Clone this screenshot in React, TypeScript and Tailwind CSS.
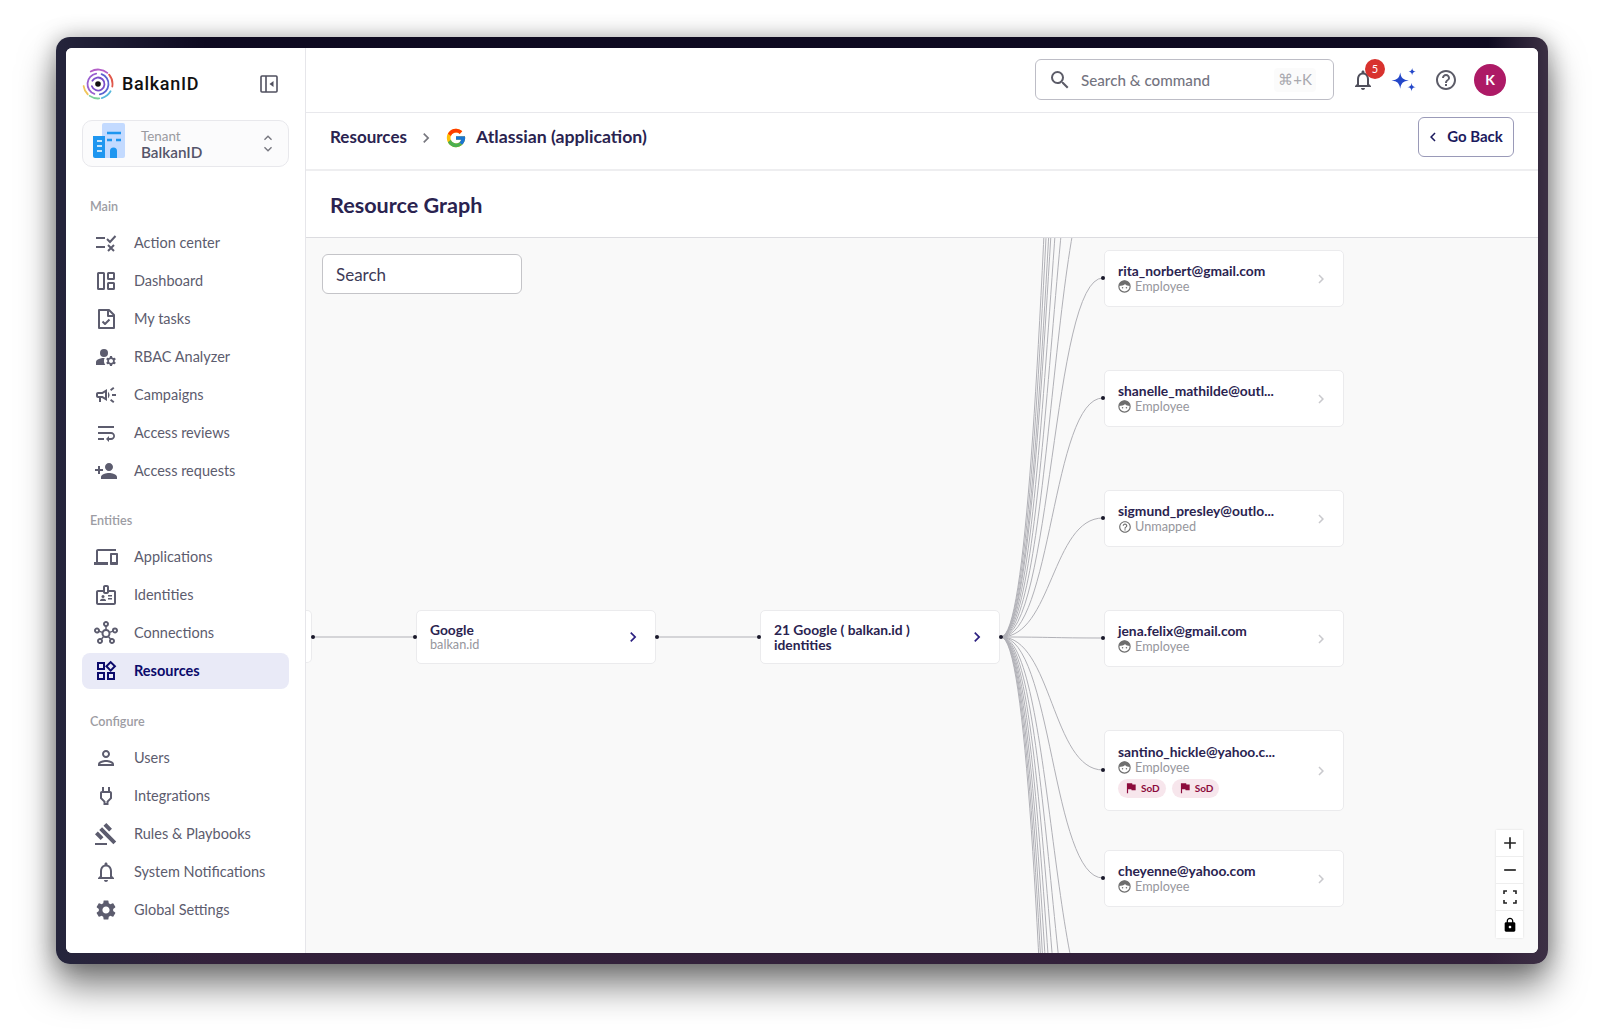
import {
  MdManageAccounts,
  MdOutlineCampaign,
  MdOutlineWrapText,
  MdPersonAdd,
  MdOutlineDevices,
  MdOutlineBadge,
  MdOutlineHub,
  MdOutlineWidgets,
  MdOutlinePerson,
  MdOutlinePower,
  MdGavel,
  MdOutlineNotifications,
  MdSettings,
  MdOutlineHelpOutline,
  MdFlag,
  MdLock,
  MdAdd,
  MdRemove,
  MdSearch,
  MdChevronLeft,
  MdChevronRight,
  MdOutlineExpandLess,
  MdOutlineExpandMore,
} from 'react-icons/md'
import { FcGoogle } from 'react-icons/fc'
import type { ReactNode } from 'react'

function ActionCenterIcon() {
  return (
    <svg viewBox="0 0 24 24" className="w-6 h-6" fill="none" stroke="currentColor" strokeWidth="2">
      <path d="M2 7h9M2 16h9" />
      <path d="M13 8l3 3 5.5-6" />
      <path d="M14 14l6 6M20 14l-6 6" />
    </svg>
  )
}

function DashboardIcon() {
  return (
    <svg viewBox="0 0 24 24" className="w-6 h-6" fill="none" stroke="currentColor" strokeWidth="2">
      <rect x="4" y="4" width="6" height="16" rx="0.5" />
      <rect x="14" y="4" width="6" height="6" rx="0.5" />
      <rect x="14" y="14" width="6" height="6" rx="0.5" />
    </svg>
  )
}

function TasksIcon() {
  return (
    <svg viewBox="0 0 24 24" className="w-6 h-6" fill="none" stroke="currentColor" strokeWidth="2" strokeLinejoin="round">
      <path d="M5 3h10l5 5v13H5z" />
      <path d="M14 3v6h6" />
      <path d="M8.5 14.5l2.5 2.5 4.5-4.5" />
    </svg>
  )
}

// one ring segment of the logo, angles in degrees, clockwise from the top
function arc(r: number, from: number, to: number) {
  const point = (a: number) => {
    const t = ((a - 90) * Math.PI) / 180
    return `${(16 + r * Math.cos(t)).toFixed(2)} ${(16 + r * Math.sin(t)).toFixed(2)}`
  }
  return `M${point(from)} A${r} ${r} 0 ${to - from > 180 ? 1 : 0} 1 ${point(to)}`
}

function LogoIcon() {
  return (
    <svg viewBox="0 0 32 32" className="w-8 h-8" fill="none" strokeLinecap="round">
      <circle cx="16" cy="16" r="2.8" fill="#111" />
      <path d={arc(6.5, -60, 250)} stroke="#7b4fc9" strokeWidth="1.8" />
      <path d={arc(10.5, 200, 350)} stroke="#9a5fd0" strokeWidth="1.8" />
      <path d={arc(10.5, 20, 170)} stroke="#5b63d0" strokeWidth="1.8" />
      <path d={arc(14.5, -30, 40)} stroke="#b45fc8" strokeWidth="1.8" />
      <path d={arc(14.5, 50, 100)} stroke="#e0574a" strokeWidth="1.8" />
      <path d={arc(14.5, 120, 165)} stroke="#55b8dc" strokeWidth="1.8" />
      <path d={arc(14.5, 175, 215)} stroke="#7ccf9a" strokeWidth="1.8" />
      <path d={arc(14.5, 225, 262)} stroke="#f0c55a" strokeWidth="1.8" />
    </svg>
  )
}

function PanelIcon() {
  return (
    <svg viewBox="0 0 18 18" className="w-[18px] h-[18px]" fill="none" stroke="#50505f" strokeWidth="1.6">
      <rect x="1" y="1" width="16" height="16" rx="1" />
      <path d="M6 1v16" />
      <path d="M13.5 6v6l-4-3z" fill="#50505f" stroke="none" />
    </svg>
  )
}

function TenantIcon() {
  return (
    <svg viewBox="0 0 32 38" className="w-8 h-[38px]">
      <rect x="9" y="0" width="23" height="35" rx="2" fill="#c3daff" />
      <path d="M0 13h12v22H2a2 2 0 0 1-2-2z" fill="#1e96f0" />
      <path d="M4 18h5M4 23h5M4 28h5" stroke="#fff" strokeWidth="1.6" />
      <path d="M14 10h14" stroke="#1e96f0" strokeWidth="2.4" />
      <path d="M14 17h5M23 17h5" stroke="#1e96f0" strokeWidth="2.4" />
      <path d="M17 35v-7a3.5 3.5 0 0 1 7 0v7z" fill="#1e96f0" />
    </svg>
  )
}

function FaceIcon() {
  return (
    <svg viewBox="0 0 12 12" className="w-[13px] h-[13px] shrink-0" fill="none">
      <circle cx="6" cy="6" r="5.2" stroke="#6f6f6f" strokeWidth="1.1" />
      <path d="M1 5.5a5 5 0 0 1 10 0c-2 0-3.5-.5-4.5-1.8C5.5 5 3 5.5 1 5.5z" fill="#6f6f6f" />
      <circle cx="4.2" cy="7.2" r=".7" fill="#6f6f6f" />
      <circle cx="7.8" cy="7.2" r=".7" fill="#6f6f6f" />
    </svg>
  )
}

function UnmappedIcon() {
  return <MdOutlineHelpOutline className="w-[14px] h-[14px] -mr-px shrink-0 text-[#6f6f6f]" />
}

function SparkleIcon() {
  return (
    <svg viewBox="1 1 24 22" className="w-[26px] h-6" fill="#2447c9">
      <path d="M9.5 5c.8 5 2.5 6.7 8 7.5-5.5.8-7.2 2.5-8 7.5-.8-5-2.5-6.7-8-7.5 5.5-.8 7.2-2.5 8-7.5z" />
      <path d="M20.5 1c.3 2.300 1 3 3.300 3.300-2.300.3-3 1-3.300 3.300-.3-2.300-1-3-3.300-3.300 2.300-.3 3-1 3.300-3.300z" />
      <path d="M20 14.500c.4 2.800 1.200 3.600 4 4-2.800.4-3.600 1.200-4 4-.4-2.800-1.200-3.600-4-4 2.800-.4 3.600-1.200 4-4z" />
    </svg>
  )
}

function FitIcon() {
  return (
    <svg viewBox="0 0 14 14" className="w-[14px] h-[14px]" fill="none" stroke="#222" strokeWidth="1.6">
      <path d="M1 4V1h3M10 1h3v3M13 10v3h-3M4 13H1v-3" />
    </svg>
  )
}

type NavItem = { label: string; icon: ReactNode; active?: boolean }

const mainItems: NavItem[] = [
  { label: 'Action center', icon: <ActionCenterIcon /> },
  { label: 'Dashboard', icon: <DashboardIcon /> },
  { label: 'My tasks', icon: <TasksIcon /> },
  { label: 'RBAC Analyzer', icon: <MdManageAccounts className="w-6 h-6" /> },
  { label: 'Campaigns', icon: <MdOutlineCampaign className="w-6 h-6" /> },
  { label: 'Access reviews', icon: <MdOutlineWrapText className="w-6 h-6" /> },
  { label: 'Access requests', icon: <MdPersonAdd className="w-6 h-6" /> },
]

const entityItems: NavItem[] = [
  { label: 'Applications', icon: <MdOutlineDevices className="w-6 h-6" /> },
  { label: 'Identities', icon: <MdOutlineBadge className="w-6 h-6" /> },
  { label: 'Connections', icon: <MdOutlineHub className="w-6 h-6" /> },
  { label: 'Resources', icon: <MdOutlineWidgets className="w-6 h-6" />, active: true },
]

const configItems: NavItem[] = [
  { label: 'Users', icon: <MdOutlinePerson className="w-6 h-6" /> },
  { label: 'Integrations', icon: <MdOutlinePower className="w-6 h-6" /> },
  { label: 'Rules & Playbooks', icon: <MdGavel className="w-6 h-6" /> },
  { label: 'System Notifications', icon: <MdOutlineNotifications className="w-6 h-6" /> },
  { label: 'Global Settings', icon: <MdSettings className="w-6 h-6" /> },
]

function NavSection({ title, items, className }: { title: string; items: NavItem[]; className: string }) {
  return (
    <div className={className}>
      <div className="h-4 pl-2 mb-[10px] text-[12.6px] leading-4 font-semibold text-[#9c9ca3]">{title}</div>
      {items.map((item) => (
        <div
          key={item.label}
          className={
            item.active
              ? 'h-9 mb-[2px] pl-3 flex items-center gap-4 rounded-lg bg-[#e9eaf7] text-[#0b0a6b] text-[14.5px] font-bold'
              : 'h-9 mb-[2px] pl-3 flex items-center gap-4 text-[#5c5c6e] text-[14.5px]'
          }
        >
          <span className="w-6 h-6 flex items-center justify-center">{item.icon}</span>
          {item.label}
        </div>
      ))}
    </div>
  )
}

function Sidebar() {
  return (
    <aside className="w-[240px] shrink-0 h-full px-4 pt-5 bg-white border-r border-[#e6e6ea]">
      <div className="h-8 flex items-center">
        <LogoIcon />
        <span className="ml-2 -mt-[2px] font-['Roboto',sans-serif] font-medium text-[18px] tracking-[0.7px] text-[#111]">BalkanID</span>
        <span className="ml-auto mr-[11px]">
          <PanelIcon />
        </span>
      </div>
      <div className="mt-5 h-[47px] relative flex items-center pl-[58px] rounded-[10px] border border-[#e8e8ec] bg-[#fbfbfc]">
        <span className="absolute left-[10px] top-[2px]">
          <TenantIcon />
        </span>
        <div className="pt-[2px]">
          <div className="text-[13.4px] leading-[15px] text-[#9a9aa0]">Tenant</div>
          <div className="text-[15.3px] leading-[17px] font-semibold text-[#55556a]">BalkanID</div>
        </div>
        <div className="ml-auto mr-[12px] flex flex-col text-[#77777f]">
          <MdOutlineExpandLess className="w-4 h-4 -mb-[5px]" />
          <MdOutlineExpandMore className="w-4 h-4" />
        </div>
      </div>
      <NavSection title="Main" items={mainItems} className="mt-[32px]" />
      <NavSection title="Entities" items={entityItems} className="mt-[24px]" />
      <NavSection title="Configure" items={configItems} className="mt-[25px]" />
    </aside>
  )
}

function TopBar() {
  return (
    <header className="h-[65px] shrink-0 flex items-center pr-8 border-b border-[#e8e8ec] bg-white">
      <div className="ml-auto w-[299px] h-[41px] -mt-[1px] flex items-center pl-3 pr-[17px] rounded-md border border-[#bdbdc6] text-[#74747f]">
        <MdSearch className="w-6 h-6 mr-[9px] text-[#5c5c68]" />
        <span className="mt-[2px] text-[15.2px] font-medium">Search &amp; command</span>
        <span className="ml-auto px-1 h-6 flex items-center text-[15px] text-[#a8a8ae] bg-[#fbfbfb] rounded">⌘+K</span>
      </div>
      <div className="ml-[17px] relative w-6 h-6 flex items-center justify-center text-[#50505c]">
        <MdOutlineNotifications className="w-6 h-6" />
        <span className="absolute -top-[9px] left-[14px] w-5 h-5 rounded-full bg-[#d8322e] text-white text-[11px] flex items-center justify-center">5</span>
      </div>
      <span className="ml-[16px]">
        <SparkleIcon />
      </span>
      <MdOutlineHelpOutline className="ml-[17px] w-6 h-6 text-[#5c5c68]" />
      <span className="ml-[16px] w-8 h-8 rounded-full bg-[#ad1a66] text-white text-sm font-bold flex items-center justify-center">K</span>
    </header>
  )
}

type Person = {
  name: string
  role: string
  pos: string
  unmapped?: boolean
  sod?: boolean
}

const people: Person[] = [
  { name: 'rita_norbert@gmail.com', role: 'Employee', pos: 'left-[798px] top-[12px] h-[57px]' },
  { name: 'shanelle_mathilde@outl...', role: 'Employee', pos: 'left-[798px] top-[132px] h-[57px]' },
  { name: 'sigmund_presley@outlo...', role: 'Unmapped', unmapped: true, pos: 'left-[798px] top-[252px] h-[57px]' },
  { name: 'jena.felix@gmail.com', role: 'Employee', pos: 'left-[798px] top-[372px] h-[57px]' },
  { name: 'santino_hickle@yahoo.c...', role: 'Employee', sod: true, pos: 'left-[798px] top-[492px] h-[81px]' },
  { name: 'cheyenne@yahoo.com', role: 'Employee', pos: 'left-[798px] top-[612px] h-[57px]' },
]

function SodBadge() {
  return (
    <span className="h-[19px] px-[6px] flex items-center gap-[3px] rounded-full bg-[#f7e6ec] text-[#8c0b3c] text-[10px] font-bold">
      <MdFlag className="w-[14px] h-[14px]" />
      SoD
    </span>
  )
}

function PersonCard({ person }: { person: Person }) {
  return (
    <div className={`absolute w-[240px] flex items-center pl-[13px] pr-[13px] rounded-[5px] border border-[#ebebed] bg-white ${person.pos}`}>
      <div className="flex-1">
        <div className="text-[13.8px] leading-4 font-bold text-[#2a2350] whitespace-nowrap">{person.name}</div>
        <div className="h-4 flex items-center gap-[4px] text-[12.7px] text-[#96969c]">
          {person.unmapped ? <UnmappedIcon /> : <FaceIcon />}
          {person.role}
        </div>
        {person.sod && (
          <div className="flex gap-[6px] mt-[3px]">
            <SodBadge />
            <SodBadge />
          </div>
        )}
      </div>
      <MdChevronRight className="w-[18px] h-[18px] text-[#c9c9cd]" />
    </div>
  )
}

// wires run from the identities node out to every identity, most of them off screen
const sourceX = 695
const sourceY = 399
const targetX = 797
const targetYs = [-760, -640, -520, -440, -320, -200, -80, 40, 160, 280, 400, 532, 640, 790, 910, 1030, 1150, 1270, 1390, 1510, 1630]

function Wires() {
  const mid = (sourceX + targetX) / 2
  return (
    <svg className="absolute inset-0 w-full h-full pointer-events-none" fill="none">
      {targetYs.map((y) => (
        <path
          key={y}
          d={`M${sourceX} ${sourceY} C${mid} ${sourceY} ${mid} ${y} ${targetX} ${y}`}
          stroke="#b1b1b7"
          strokeWidth="1"
        />
      ))}
      <path d="M7 399L109 399M351 399L453 399" stroke="#b1b1b7" strokeWidth="1" />
      {[7, 109, 351, 453, 695].map((x) => (
        <circle key={x} cx={x} cy="399" r="2" fill="#1a192b" />
      ))}
      {[40, 160, 280, 400, 532, 640].map((y) => (
        <circle key={y} cx={targetX} cy={y} r="2" fill="#1a192b" />
      ))}
    </svg>
  )
}

function Graph() {
  return (
    <div className="flex-1 relative overflow-hidden bg-[#f9f9f9]">
      <div className="absolute left-4 top-4 w-[200px] h-10 pl-[13px] pt-[2px] flex items-center rounded-md border border-[#c4c4c8] bg-white text-[17px] text-[#3e3a57]">
        Search
      </div>
      <div className="absolute left-0 top-[372px] w-[6px] h-[53px] rounded-r-[5px] border border-l-0 border-[#ebebed] bg-white" />
      <div className="absolute left-[110px] top-[372px] w-[240px] h-[54px] flex items-center pl-[13px] pr-4 rounded-[5px] border border-[#ebebed] bg-white">
        <div className="flex-1">
          <div className="text-[13.8px] leading-[14px] font-bold text-[#2a2350]">Google</div>
          <div className="text-[12.7px] leading-[14px] text-[#96969c]">balkan.id</div>
        </div>
        <MdChevronRight className="w-5 h-5 -mr-[4px] text-[#2c2080]" />
      </div>
      <div className="absolute left-[454px] top-[372px] w-[240px] h-[54px] flex items-center pl-[13px] pr-4 rounded-[5px] border border-[#ebebed] bg-white">
        <div className="flex-1 text-[13.8px] leading-[15px] font-bold text-[#2a2350]">
          21 Google ( balkan.id )
          <br />
          identities
        </div>
        <MdChevronRight className="w-5 h-5 -mr-[4px] text-[#2c2080]" />
      </div>
      {people.map((person) => (
        <PersonCard key={person.name} person={person} />
      ))}
      <Wires />
      <div className="absolute right-[15px] bottom-[15px] w-[27px] flex flex-col bg-white shadow-[0_0_2px_rgba(0,0,0,0.12)] text-[#222]">
        <span className="h-[27px] flex items-center justify-center border-b border-[#eeeeee]">
          <MdAdd className="w-5 h-5" />
        </span>
        <span className="h-[27px] flex items-center justify-center border-b border-[#eeeeee]">
          <MdRemove className="w-5 h-5" />
        </span>
        <span className="h-[27px] flex items-center justify-center border-b border-[#eeeeee]">
          <FitIcon />
        </span>
        <span className="h-[27px] flex items-center justify-center">
          <MdLock className="w-4 h-4 text-black" />
        </span>
      </div>
    </div>
  )
}

export default function App() {
  return (
    <div className="w-[1604px] h-[1036px] pl-[56px] pt-[37px] bg-white font-['Lato',sans-serif] overflow-hidden">
      <div className="w-[1492px] h-[927px] px-[10px] pt-[11px] pb-[11px] rounded-[14px] shadow-[0_22px_36px_rgba(0,0,0,0.5),0_0_22px_rgba(0,0,0,0.28)] bg-[linear-gradient(90deg,#25253c_0%,transparent_10%,transparent_96%,#3c3044_100%),linear-gradient(180deg,#0e0a20,#33213b)]">
        <div className="w-full h-full flex rounded-[6px] overflow-hidden bg-white">
          <Sidebar />
          <main className="flex-1 min-w-0 flex flex-col">
            <TopBar />
            <div className="h-[58px] shrink-0 flex items-center pl-6 pr-6 pb-[7px] border-b-2 border-[#eeeef0]">
              <span className="-mt-[2px] text-[17px] font-bold text-[#2a2350]">Resources</span>
              <MdChevronRight className="mx-[9px] w-5 h-5 text-[#77777f]" />
              <FcGoogle className="w-[22px] h-[22px] mr-[9px]" />
              <span className="text-[17.7px] font-bold text-[#2a2350]">Atlassian (application)</span>
              <span className="ml-auto -mt-[2px] w-[96px] h-10 pr-[5px] flex items-center justify-center gap-[5px] rounded-md border border-[#9a9ab8] text-[15px] font-bold text-[#1c1a5e]">
                <MdChevronLeft className="w-[18px] h-[18px]" />
                Go Back
              </span>
            </div>
            <div className="h-[67px] shrink-0 flex items-center pl-6 pt-[3px] border-b border-[#dcdce0]">
              <h1 className="text-[21.6px] font-bold text-[#2a2350]">Resource Graph</h1>
            </div>
            <Graph />
          </main>
        </div>
      </div>
    </div>
  )
}
